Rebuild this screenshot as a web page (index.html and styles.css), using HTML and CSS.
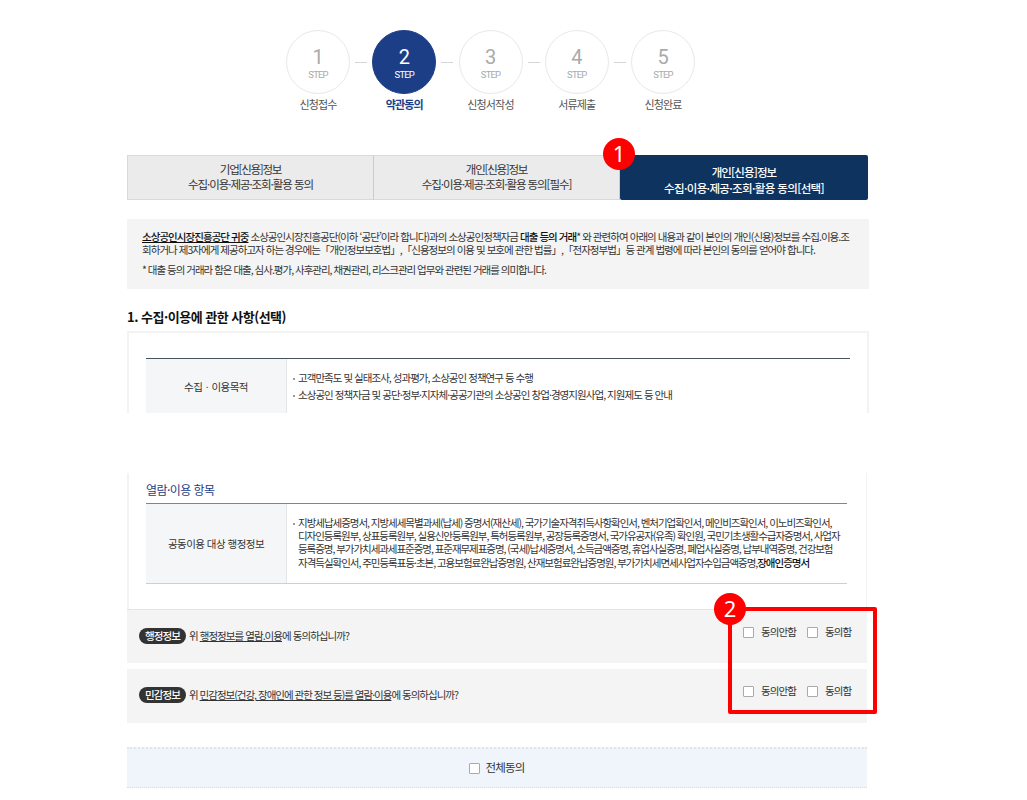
FILE: index.html
```html
<!DOCTYPE html>
<html lang="ko">
<head>
<meta charset="utf-8">
<title>약관동의</title>
<link rel="stylesheet" href="styles.css">
</head>
<body>
<main class="page">
<ol class="steps">
<li class="step"><div class="circle"><b>1</b><i>STEP</i></div><span class="step-name">신청접수</span></li>
<li class="dash"></li>
<li class="step current"><div class="circle"><b>2</b><i>STEP</i></div><span class="step-name">약관동의</span></li>
<li class="dash"></li>
<li class="step"><div class="circle"><b>3</b><i>STEP</i></div><span class="step-name">신청서작성</span></li>
<li class="dash"></li>
<li class="step"><div class="circle"><b>4</b><i>STEP</i></div><span class="step-name">서류제출</span></li>
<li class="dash"></li>
<li class="step"><div class="circle"><b>5</b><i>STEP</i></div><span class="step-name">신청완료</span></li>
</ol>
<nav class="tabs">
<div class="tab"><span class="tab-title">기업[신용]정보</span><span>수집·이용·제공·조회·활용 동의</span></div>
<div class="tab"><span class="tab-title">개인[신용]정보</span><span>수집·이용·제공·조회·활용 동의[필수]</span></div>
<div class="tab active"><span class="tab-title">개인[신용]정보</span><span>수집·이용·제공·조회·활용 동의[선택]</span><em class="marker marker-one">1</em></div>
</nav>
<section class="notice">
<p class="line n1"><strong><u>소상공인시장진흥공단 귀중</u></strong> 소상공인시장진흥공단(이하 ‘공단’이라 합니다)과의 소상공인정책자금 <strong>대출 등의 거래</strong>* 와 관련하여 아래의 내용과 같이 본인의 개인(신용)정보를 수집.이용.조</p>
<p class="line n2">회하거나 제3자에게 제공하고자 하는 경우에는「개인정보보호법」,「신용정보의 이용 및 보호에 관한 법률」,「전자정부법」등 관계 법령에 따라 본인의 동의를 얻어야 합니다.</p>
<p class="line n3">* 대출 등의 거래라 함은 대출, 심사.평가, 사후관리, 채권관리, 리스크관리 업무와 관련된 거래를 의미합니다.</p>
</section>
<h2 class="heading">1. 수집·이용에 관한 사항(선택)</h2>
<section class="panel purpose">
<div class="table">
<div class="label">수집ㆍ이용목적</div>
<div class="value">
<p class="line item p1">고객만족도 및 실태조사, 성과평가, 소상공인 정책연구 등 수행</p>
<p class="line item p2">소상공인 정책자금 및 공단·정부·지자체·공공기관의 소상공인 창업·경영지원사업, 지원제도 등 안내</p>
</div>
</div>
</section>
<section class="panel items">
<h3 class="subheading">열람·이용 항목</h3>
<div class="table">
<div class="label">공동이용 대상 행정정보</div>
<div class="value">
<p class="line item d1">지방세납세증명서, 지방세세목별과세(납세) 증명서(재산세), 국가기술자격취득사항확인서, 벤처기업확인서, 메인비즈확인서, 이노비즈확인서,</p>
<p class="line d2">디자인등록원부, 상표등록원부, 실용신안등록원부, 특허등록원부, 공장등록증명서, 국가유공자(유족) 확인원, 국민기초생활수급자증명서, 사업자</p>
<p class="line d3">등록증명, 부가가치세과세표준증명, 표준재무제표증명, (국세)납세증명서, 소득금액증명, 휴업사실증명, 폐업사실증명, 납부내역증명, 건강보험</p>
<p class="line d4">자격득실확인서, 주민등록표등·초본, 고용보험료완납증명원, 산재보험료완납증명원, 부가가치세면세사업자수입금액증명,<strong>장애인증명서</strong></p>
</div>
</div>
</section>
<section class="consent">
<div class="consent-row first">
<span class="pill">행정정보</span>
<p class="line q1">위 <u>행정정보를 열람.이용</u>에 동의하십니까?</p>
<div class="choices"><i class="box"></i><span class="c1">동의안함</span><i class="box"></i><span class="c2">동의함</span></div>
</div>
<div class="consent-row">
<span class="pill">민감정보</span>
<p class="line q2">위 <u>민감정보(건강, 장애인에 관한 정보 등)를 열람·이용</u>에 동의하십니까?</p>
<div class="choices"><i class="box"></i><span class="c1">동의안함</span><i class="box"></i><span class="c2">동의함</span></div>
</div>
<div class="highlight"><em class="marker marker-two">2</em></div>
</section>
<div class="all"><i class="box"></i><span>전체동의</span></div>
</main>
</body>
</html>
```
FILE: styles.css
```css
* { box-sizing: border-box; }
body { margin: 0; background: #fff; color: #333; font-family: "Noto Sans CJK KR", "Noto Sans", sans-serif; font-size: 10.5px; }
p, h2, h3, ol { margin: 0; padding: 0; font-weight: 400; list-style: none; }
i, em { font-style: normal; }
strong { font-weight: 500; color: #111; }
.page { width: 742px; height: 800px; margin-left: 127px; padding-top: 30px; display: flex; flex-direction: column; }
.line { white-space: nowrap; }

.steps { display: flex; width: 409px; height: 84px; margin-left: 159px; justify-content: space-between; }
.step { width: 64px; display: flex; flex-direction: column; align-items: center; }
.circle { width: 64px; height: 64px; border: 1px solid #e8e8e8; border-radius: 50%; display: flex; flex-direction: column; align-items: center; padding-top: 15px; color: #aaa; font-family: Roboto, sans-serif; }
.circle b { font-weight: 400; font-size: 20px; line-height: 23px; }
.circle i { font-size: 9.5px; line-height: 12px; letter-spacing: -0.85px; }
.step-name { font-size: 11px; line-height: 20px; letter-spacing: -0.85px; color: #555; white-space: nowrap; }
.dash { width: 12px; height: 1px; margin-top: 32px; background: #d5d5d5; }
.current .circle { background: #1c3e87; border-color: #1c3e87; color: #fff; }
.current .step-name { color: #1c3e87; font-weight: 700; }

.tabs { display: grid; grid-template-columns: 247px 246px 248px; width: 741px; height: 45px; margin-top: 41px; }
.tab { display: flex; flex-direction: column; align-items: center; padding-top: 6px; font-size: 11.5px; line-height: 15px; letter-spacing: -1.065px; background: #ebebeb; border: 1px solid #d9d9d9; border-right-color: #ccc; white-space: nowrap; }
.tab + .tab { border-left: 0; }
.tab-title { letter-spacing: -1.25px; }
.tab.active { position: relative; background: #0f335f; border: 0; border-radius: 2px; color: #fff; font-weight: 500; padding-top: 9px; line-height: 16px; letter-spacing: -0.632px; }
.active .tab-title { letter-spacing: -0.88px; }

.marker { position: absolute; width: 32px; height: 32px; border-radius: 50%; background: #f00; color: #fff; font: 400 22px/31px "Noto Sans", sans-serif; letter-spacing: 0; text-align: center; }
.marker-one { left: -17px; top: -17px; }
.marker-two { left: -18px; top: -18px; }

.notice { height: 70px; margin-top: 19px; padding: 11px 15px; background: #f4f4f4; line-height: 13px; }
.n1 { letter-spacing: -0.954px; }
.n2 { letter-spacing: -0.97px; }
.n3 { margin-top: 7px; letter-spacing: -1.007px; }
.heading { height: 20px; margin-top: 18px; font-size: 13px; font-weight: 700; line-height: 20px; letter-spacing: -0.498px; color: #111; white-space: nowrap; }

.panel { border: 2px solid #f3f3f3; border-bottom: 0; }
.purpose { height: 82px; margin-top: 4px; padding: 25px 17px 0; }
.table { display: grid; grid-template-columns: 141px 1fr; }
.purpose .table { height: 55px; border-top: 1px solid #46525f; }
.label { display: flex; align-items: center; justify-content: center; background: #f5f6f8; border-right: 1px solid #e4e5e7; letter-spacing: -0.53px; white-space: nowrap; }
.value { padding-left: 11px; }
.purpose .value { padding-top: 11px; line-height: 16.5px; }
.item { position: relative; }
.item::before { content: ""; position: absolute; left: -5px; top: 50%; width: 2px; height: 2px; background: #999; }
.p1 { letter-spacing: -0.969px; }
.p2 { letter-spacing: -0.954px; }

.items { width: 740px; height: 136px; margin-top: 60px; padding: 7px 19px 0 17px; border-top: 0; border-right-width: 1px; }
.subheading { height: 23px; font-size: 12px; line-height: 20px; letter-spacing: -0.557px; color: #1c3e87; }
.items .table { height: 81px; border-top: 1px solid #7d858e; border-bottom: 1px solid #cfd0c8; }
.items .value { padding-top: 12px; line-height: 13.2px; }
.d1 { letter-spacing: -1.03px; }
.d2 { letter-spacing: -1.047px; }
.d3 { letter-spacing: -1.051px; }
.d4 { letter-spacing: -1.029px; }

.consent { position: relative; width: 740px; display: flex; flex-direction: column; gap: 6px; }
.consent-row { height: 54px; display: flex; background: #f4f4f4; padding-left: 12px; }
.first { border-top: 1px solid #e4e4e4; }
.pill { width: 47px; height: 16px; margin-top: 18px; border-radius: 8px; background: #333; color: #fff; font-weight: 500; line-height: 15px; letter-spacing: -0.9px; text-align: center; }
.consent-row .line { width: 554px; margin: 18px 0 0 3px; line-height: 16px; }
.q1 { letter-spacing: -0.954px; }
.q2 { letter-spacing: -1.001px; }
.choices { display: flex; height: 12px; margin-top: 17px; line-height: 10px; letter-spacing: -0.93px; white-space: nowrap; }
.box { width: 11px; height: 11px; border: 1px solid #aaa; border-radius: 1px; background: #fff; flex: none; }
.c1 { width: 46px; margin-left: 7px; }
.c2 { margin-left: 7px; }
.highlight { position: absolute; left: 601px; top: -2px; width: 149px; height: 107px; border: 4px solid #f00; border-radius: 2px; }

.all { width: 740px; height: 41px; margin-top: 24px; border-top: 2px dotted #dde7ec; border-bottom: 1px dotted #d3dfe6; background: #eff5fa; display: flex; align-items: center; justify-content: center; gap: 5px; font-size: 11.5px; line-height: 14px; letter-spacing: -0.8px; }
.all span { margin-top: -2px; }
```
